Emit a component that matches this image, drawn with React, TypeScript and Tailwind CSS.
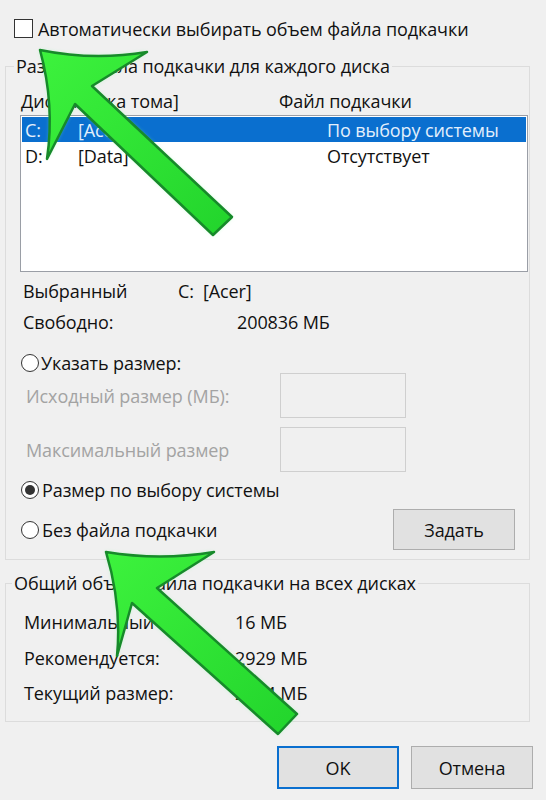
import React from "react";

function Radio({ checked }: { checked?: boolean }) {
  return (
    <span className="flex h-[18px] w-[18px] shrink-0 items-center justify-center rounded-full border border-[#333] bg-white">
      {checked && <span className="h-[10px] w-[10px] rounded-full bg-[#333]" />}
    </span>
  );
}

function Arrows() {
  return (
    <svg className="pointer-events-none absolute left-0 top-0" width="546" height="800" viewBox="0 0 546 800">
      <defs>
        <linearGradient id="ag" x1="0" y1="0" x2="1" y2="1">
          <stop offset="0" stopColor="#3df23d" />
          <stop offset="1" stopColor="#22d42c" />
        </linearGradient>
        <filter id="glow" x="-20%" y="-20%" width="140%" height="140%">
          <feGaussianBlur stdDeviation="2" />
        </filter>
      </defs>
      <g>
        <path
          d="M40 50 Q93 61 147 52 L92 86 L232 217 L213 235 L75 104 L47 159 Q55 105 40 50 Z"
          fill="#7dff9a"
          opacity="0.5"
          filter="url(#glow)"
        />
        <path
          d="M40 50 Q93 61 147 52 L92 86 L232 217 L213 235 L75 104 L47 159 Q55 105 40 50 Z"
          fill="url(#ag)"
          stroke="#178a2a"
          strokeWidth="2.5"
          strokeLinejoin="round"
        />
      </g>
      <g>
        <path
          d="M106 552 Q160 561 214 552 L157 588 L297 714 L278 734 L132 603 L117 656 Q122 605 106 552 Z"
          fill="#7dff9a"
          opacity="0.5"
          filter="url(#glow)"
        />
        <path
          d="M106 552 Q160 561 214 552 L157 588 L297 714 L278 734 L132 603 L117 656 Q122 605 106 552 Z"
          fill="url(#ag)"
          stroke="#178a2a"
          strokeWidth="2.5"
          strokeLinejoin="round"
        />
      </g>
    </svg>
  );
}

export default function App() {
  return (
    <div className="relative h-[800px] w-[546px] overflow-hidden bg-[#f0f0f0] font-['Open_Sans',sans-serif] text-[18px] leading-none tracking-[-0.1px] text-[#111]">
      <div className="flex flex-col pt-[19px]">
        <div className="flex h-[19px] items-center gap-[5px] pl-[14px]">
          <span className="h-[19px] w-[19px] shrink-0 border border-[#333] bg-white" />
          <span className="whitespace-nowrap">Автоматически выбирать объем файла подкачки</span>
        </div>

        <fieldset className="ml-[5px] mt-[16px] w-[525px] border border-[#dcdcdc] pb-[9px] pl-[14px] pr-[1px]">
          <legend className="ml-[-6px] h-[24px] px-[2px] leading-[24px] whitespace-nowrap">
            Размер файла подкачки для каждого диска
          </legend>
          <div className="mt-[12px] flex h-[22px] items-center pl-[1px]">
            <span className="w-[258px]">Диск [Метка тома]</span>
            <span>Файл подкачки</span>
          </div>
          <div className="mt-[3px] flex h-[157px] w-[508px] flex-col border border-[#9a9ea6] bg-white px-[1px]">
            <div className="mt-[1px] flex h-[25px] items-center bg-[#0a6fcf] pl-[3px] text-[#e3effc]">
              <span className="w-[53px]">C:</span>
              <span className="w-[249px]">[Acer]</span>
              <span>По выбору системы</span>
            </div>
            <div className="flex h-[28px] items-center pl-[3px]">
              <span className="w-[53px]">D:</span>
              <span className="w-[249px]">[Data]</span>
              <span>Отсутствует</span>
            </div>
          </div>

          <div className="mt-[8px] flex h-[22px] items-center pl-[3px]">
            <span className="w-[155px]">Выбранный</span>
            <span>C:&nbsp;&nbsp;[Acer]</span>
          </div>
          <div className="mt-[9px] flex h-[22px] items-center pl-[3px]">
            <span className="w-[214px]">Свободно:</span>
            <span>200836 МБ</span>
          </div>

          <div className="mt-[19px] flex h-[21px] items-center gap-[2px] pl-[1px]">
            <Radio />
            <span>Указать размер:</span>
          </div>
          <div className="flex h-[45px] items-center pl-[6px]">
            <span className="w-[254px] text-[#a3a3a3]">Исходный размер (МБ):</span>
            <span className="h-[45px] w-[126px] border border-[#cfcfcf]" />
          </div>
          <div className="mt-[9px] flex h-[45px] items-center pl-[6px]">
            <span className="w-[254px] text-[#a3a3a3]">Максимальный размер</span>
            <span className="h-[45px] w-[126px] border border-[#cfcfcf]" />
          </div>

          <div className="mt-[7px] flex h-[22px] items-center gap-[3px] pl-[1px]">
            <Radio checked />
            <span>Размер по выбору системы</span>
          </div>
          <div className="mt-[8px] flex h-[41px] items-center pl-[1px]">
            <div className="flex flex-1 items-center gap-[3px]">
              <Radio />
              <span>Без файла подкачки</span>
            </div>
            <button className="mr-[13px] flex h-[41px] w-[122px] items-center justify-center border border-[#adadad] bg-[#e1e1e1]">
              Задать
            </button>
          </div>
        </fieldset>

        <fieldset className="ml-[5px] mt-[11px] w-[525px] border border-[#dcdcdc] pb-[17px] pl-[18px]">
          <legend className="ml-[-12px] h-[24px] px-[2px] leading-[24px] whitespace-nowrap">
            Общий объем файла подкачки на всех дисках
          </legend>
          <div className="mt-[16px] flex h-[22px] items-center">
            <span className="w-[211px]">Минимальный</span>
            <span>16 МБ</span>
          </div>
          <div className="mt-[14px] flex h-[22px] items-center">
            <span className="w-[211px]">Рекомендуется:</span>
            <span>2929 МБ</span>
          </div>
          <div className="mt-[13px] flex h-[22px] items-center">
            <span className="w-[211px]">Текущий размер:</span>
            <span>2944 МБ</span>
          </div>
        </fieldset>

        <div className="mt-[24px] flex justify-end gap-[12px] pr-[13px]">
          <button className="flex h-[43px] w-[122px] items-center justify-center border-2 border-[#0a6fcf] bg-[#e1e1e1]">
            OK
          </button>
          <button className="flex h-[43px] w-[122px] items-center justify-center border border-[#adadad] bg-[#e1e1e1]">
            Отмена
          </button>
        </div>
      </div>
      <Arrows />
    </div>
  );
}
